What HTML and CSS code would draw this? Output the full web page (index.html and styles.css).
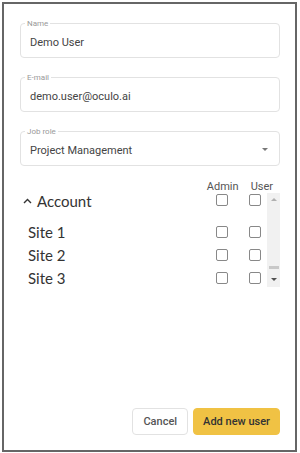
FILE: index.html
```html
<!DOCTYPE html>
<html lang="en">
<head>
  <meta charset="UTF-8">
  <title>Add new user</title>
  <link rel="stylesheet" href="styles.css">
</head>
<body>
  <div class="dialog">
    <div class="field">
      <span class="field-label">Name</span>
      <span class="field-value">Demo User</span>
    </div>
    <div class="field">
      <span class="field-label">E-mail</span>
      <span class="field-value">demo.user@oculo.ai</span>
    </div>
    <div class="field select">
      <span class="field-label">Job role</span>
      <span class="field-value">Project Management</span>
      <span class="arrow"></span>
    </div>

    <!-- permissions -->
    <div class="perm-head">
      <span>Admin</span>
      <span>User</span>
    </div>
    <div class="perm-body">
      <div class="perm-list">
        <div class="perm-row group">
          <svg class="caret" width="9" height="6" viewBox="0 0 9 6"><polyline points="1,5 4.5,1.5 8,5" fill="none" stroke="#333" stroke-width="1.4"/></svg>
          <span class="perm-name">Account</span>
          <span class="box"></span>
          <span class="box"></span>
        </div>
        <div class="perm-row">
          <span class="perm-name site">Site 1</span>
          <span class="box"></span>
          <span class="box"></span>
        </div>
        <div class="perm-row">
          <span class="perm-name site">Site 2</span>
          <span class="box"></span>
          <span class="box"></span>
        </div>
        <div class="perm-row">
          <span class="perm-name site">Site 3</span>
          <span class="box"></span>
          <span class="box"></span>
        </div>
      </div>
      <div class="scrollbar">
        <span class="sb-up"></span>
        <span class="sb-thumb"></span>
        <span class="sb-down"></span>
      </div>
    </div>

    <div class="actions">
      <button class="btn">Cancel</button>
      <button class="btn primary">Add new user</button>
    </div>
  </div>
</body>
</html>
```

FILE: styles.css
```css
html, body {
  margin: 0;
  padding: 0;
  background: #fff;
}
body {
  font-family: Roboto, "Liberation Sans", sans-serif;
  color: #333;
}
.dialog {
  box-sizing: border-box;
  margin: 2px 3px 0 2px;
  height: 450px;
  border: 2px solid #666;
  padding: 19px 15px 15px 16px;
  display: flex;
  flex-direction: column;
}
.field {
  position: relative;
  box-sizing: border-box;
  height: 35px;
  border: 1px solid #e2e2e2;
  border-radius: 4px;
  padding: 3px 9px 0 9px;
  display: flex;
  align-items: center;
  margin-bottom: 19px;
}
.field-label {
  position: absolute;
  top: -5px;
  left: 4px;
  padding: 0 2px;
  background: #fff;
  font-size: 8px;
  line-height: 9px;
  color: #999;
}
.field-value {
  font-size: 11px;
  color: #444;
}
.select .arrow {
  position: absolute;
  right: 11px;
  top: 16px;
  width: 0;
  height: 0;
  border-left: 3.5px solid transparent;
  border-right: 3.5px solid transparent;
  border-top: 3.5px solid #777;
}
.field.select {
  margin-bottom: 15px;
}
.perm-head {
  display: flex;
  justify-content: flex-end;
  gap: 12px;
  padding-right: 7px;
  font-size: 11px;
  line-height: 12px;
  color: #555;
}
.perm-body {
  display: flex;
  height: 94px;
  overflow: hidden;
}
.perm-list {
  flex: 1;
  padding-left: 3px;
}
.perm-row {
  display: flex;
  align-items: center;
  height: 23px;
  font-family: Lato, "Open Sans", sans-serif;
  font-size: 15px;
  color: #333;
}
.perm-row.group {
  height: 14px;
  margin-bottom: 13px;
}
.caret {
  margin-right: 5px;
  margin-top: 2px;
}
.perm-name {
  flex: 1;
  padding-top: 1px;
}
.perm-name.site {
  padding-left: 5px;
}
.box {
  box-sizing: border-box;
  width: 12px;
  height: 12px;
  border: 1px solid #888;
  border-radius: 2px;
  margin-left: 21px;
}
.box:last-child {
  margin-right: 6px;
}
.scrollbar {
  width: 13px;
  background: #f1f1f1;
  position: relative;
}
.sb-up, .sb-down {
  position: absolute;
  left: 4px;
  width: 0;
  height: 0;
  border-left: 3px solid transparent;
  border-right: 3px solid transparent;
}
.sb-up {
  top: 5px;
  border-bottom: 3px solid #b0b0b0;
}
.sb-down {
  bottom: 6px;
  border-top: 3px solid #505050;
}
.sb-thumb {
  position: absolute;
  left: 2px;
  right: 1px;
  top: 73px;
  height: 3px;
  background: #c8c8c8;
}
.actions {
  margin-top: auto;
  display: flex;
  justify-content: flex-end;
  gap: 5px;
}
.btn {
  box-sizing: border-box;
  height: 27px;
  border: 1px solid #e2e2e2;
  border-radius: 4px;
  background: #fff;
  font-family: Roboto, "Liberation Sans", sans-serif;
  font-size: 11px;
  font-weight: 500;
  color: #555;
  padding: 0 10px;
}
.btn.primary {
  background: #f0c244;
  border-color: #f0c244;
  color: #333;
  padding: 0 9px;
}
```
